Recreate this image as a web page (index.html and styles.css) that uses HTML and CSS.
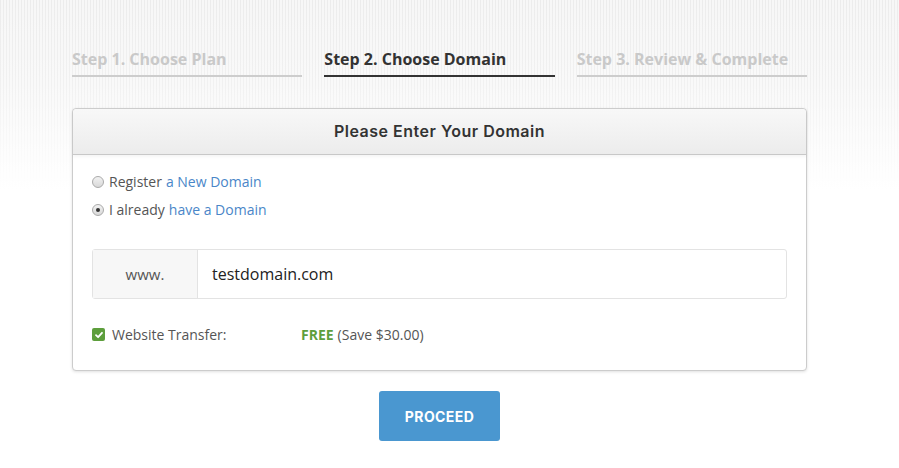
FILE: index.html
```html
<!DOCTYPE html>
<html>
<head>
<meta charset="utf-8">
<link rel="stylesheet" href="styles.css">
</head>
<body>
<div class="page">
  <div class="wrap">
    <div class="steps">
      <div class="step">Step 1. Choose Plan</div>
      <div class="step active">Step 2. Choose Domain</div>
      <div class="step">Step 3. Review &amp; Complete</div>
    </div>
    <div class="panel">
      <div class="panel-head">Please Enter Your Domain</div>
      <div class="panel-body">
        <label class="radio-row"><span class="radio"></span>Register <a class="lnk">a New Domain</a></label>
        <label class="radio-row"><span class="radio checked"></span>I already <a class="lnk">have a Domain</a></label>
        <div class="input-group">
          <div class="addon">www.</div>
          <div class="field">testdomain.com</div>
        </div>
        <div class="transfer">
          <span class="check"><svg width="10" height="10" viewBox="0 0 10 10"><path d="M2 5.2 L4.1 7.2 L8 2.8" fill="none" stroke="#fff" stroke-width="1.8" stroke-linecap="round" stroke-linejoin="round"/></svg></span>
          <span class="t-label">Website Transfer:</span>
          <span class="free">FREE</span>
          <span class="save">(Save $30.00)</span>
        </div>
      </div>
    </div>
    <div class="actions">
      <button class="btn">PROCEED</button>
    </div>
  </div>
</div>
</body>
</html>
```
FILE: styles.css
```css
html, body {
  margin: 0;
  padding: 0;
  background: #fff;
}
.page {
  width: 899px;
  height: 468px;
  overflow: hidden;
  background:
    linear-gradient(to bottom, rgba(255,255,255,0) 0px, rgba(255,255,255,0.25) 80px, #fff 190px),
    repeating-linear-gradient(to right, #ececec 0px, #ececec 1px, #f7f7f7 1px, #f7f7f7 3px);
  font-family: "Open Sans", "Liberation Sans", sans-serif;
}
.wrap {
  width: 735px;
  margin-left: 72px;
  padding-top: 45px;
}
.steps {
  display: flex;
  gap: 22px;
}
.step {
  flex: 1;
  font-weight: 700;
  font-size: 16px;
  color: #c9c9c9;
  line-height: 28px;
  padding-bottom: 2px;
  border-bottom: 2px solid #cdcdcd;
}
.step.active {
  color: #333;
  border-bottom-color: #333;
}
.panel {
  margin-top: 31px;
  border: 1px solid #ccc;
  border-radius: 4px;
  background: #fff;
  box-shadow: 0 1px 3px rgba(0,0,0,0.12);
}
.panel-head {
  height: 45px;
  line-height: 45px;
  text-align: center;
  font-family: "Inter", "Open Sans", sans-serif;
  font-weight: 600;
  font-size: 16px;
  letter-spacing: 0.5px;
  color: #333;
  background: linear-gradient(to bottom, #f8f8f8, #ececec);
  border-bottom: 1px solid #c8c8c8;
  border-radius: 4px 4px 0 0;
  box-shadow: 0 2px 3px rgba(0,0,0,0.04);
}
.panel-body {
  padding: 13px 19px 26px 19px;
}
.radio-row {
  display: flex;
  align-items: center;
  font-size: 14px;
  color: #555;
  line-height: 28px;
}
.radio {
  width: 10px;
  height: 10px;
  border: 1px solid #aaa;
  border-radius: 50%;
  background: linear-gradient(#f2f2f2, #d8d8d8);
  margin-right: 5px;
  position: relative;
}
.radio.checked::after {
  content: "";
  position: absolute;
  left: 3px;
  top: 3px;
  width: 4px;
  height: 4px;
  border-radius: 50%;
  background: #333;
}
.lnk {
  color: #4a86c8;
  margin-left: 4px;
}
.input-group {
  display: flex;
  margin-top: 25px;
  height: 48px;
  border: 1px solid #e3e3e3;
  border-radius: 3px;
}
.addon {
  width: 104px;
  border-right: 1px solid #e3e3e3;
  background: #f7f7f7;
  color: #555;
  font-size: 15px;
  display: flex;
  align-items: center;
  justify-content: center;
}
.field {
  flex: 1;
  display: flex;
  align-items: center;
  padding-left: 14px;
  font-size: 16px;
  color: #222;
}
.transfer {
  display: flex;
  align-items: center;
  margin-top: 26px;
  font-size: 14px;
  color: #555;
}
.check {
  width: 13px;
  height: 13px;
  border-radius: 2px;
  background: #5d9e3c;
  display: flex;
  align-items: center;
  justify-content: center;
  margin-right: 7px;
}
.t-label {
  width: 189px;
}
.free {
  color: #5d9e3c;
  font-weight: 700;
  margin-right: 4px;
}
.actions {
  display: flex;
  justify-content: center;
  padding-top: 20px;
}
.btn {
  width: 121px;
  height: 50px;
  border: none;
  border-radius: 3px;
  background: #4a97d0;
  color: #fff;
  font-family: "Inter", "Open Sans", sans-serif;
  font-weight: 700;
  font-size: 14px;
  letter-spacing: 0.4px;
}
```
